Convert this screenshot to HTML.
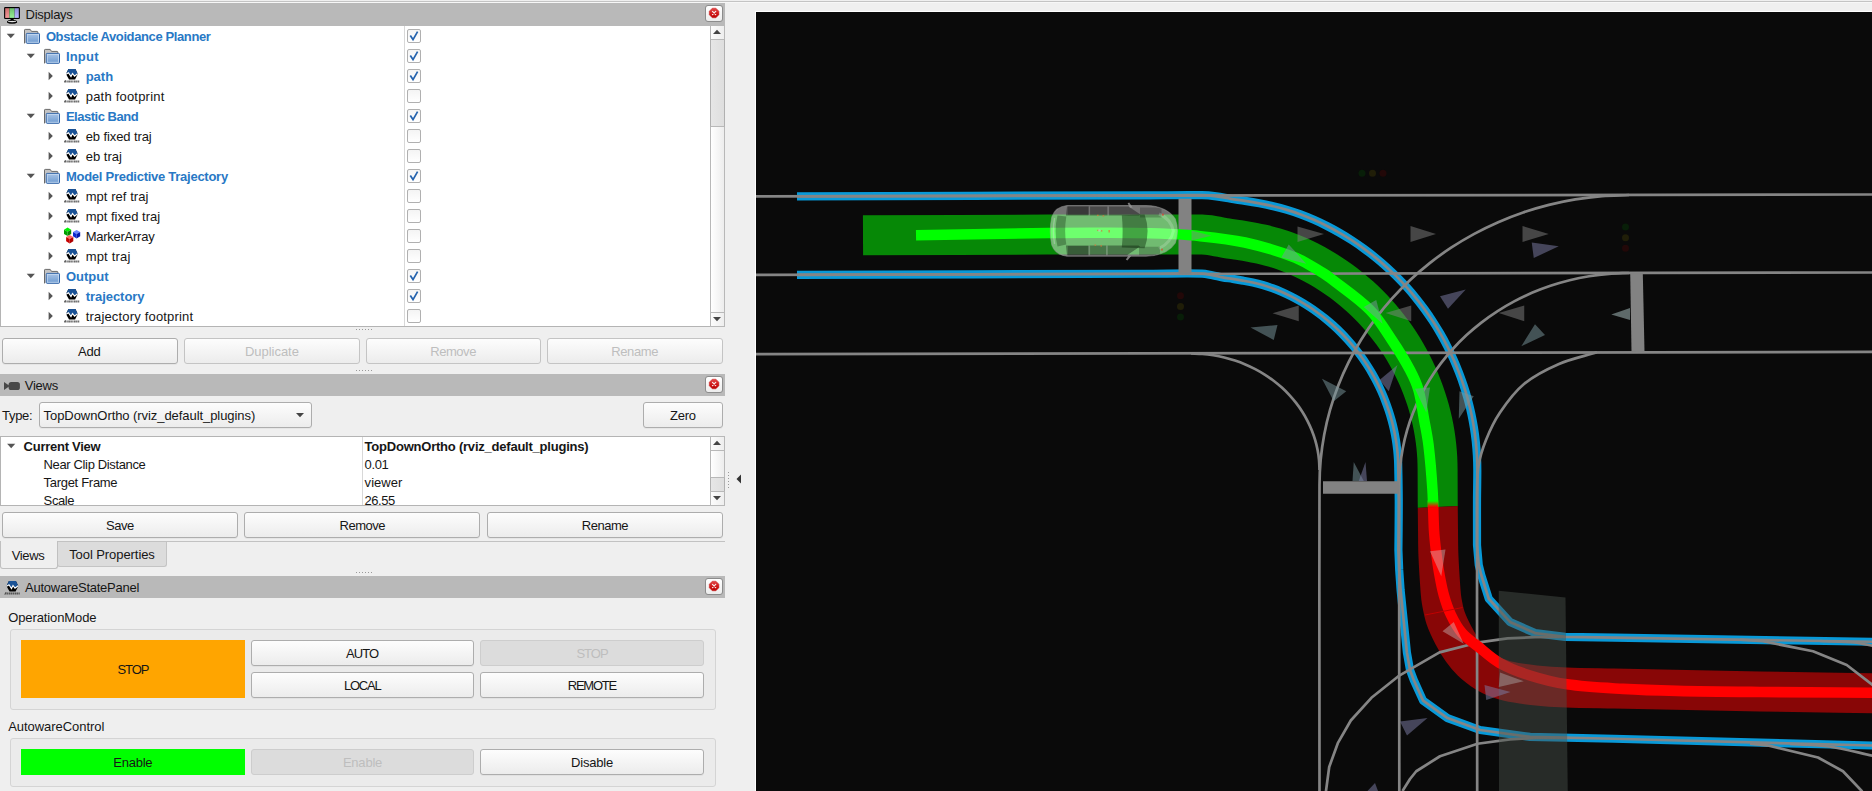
<!DOCTYPE html>
<html><head><meta charset="utf-8"><title>RViz</title>
<style>
html,body{margin:0;padding:0;}
body{width:1872px;height:791px;overflow:hidden;background:#efefef;position:relative;font-family:'Liberation Sans',sans-serif;}
.a{position:absolute;display:block;}
.t{position:absolute;white-space:pre;line-height:16px;height:16px;font-size:13px;font-family:'Liberation Sans',sans-serif;}
.bar{position:absolute;left:0;width:725px;background:#b9b9b9;}
.box{position:absolute;background:#fff;border:1px solid #b4b4b4;box-sizing:border-box;}
.btn{position:absolute;border:1px solid #adadad;border-radius:3px;background:linear-gradient(#fdfdfd,#ececec);box-shadow:0 1px 0 rgba(0,0,0,0.04);}
.btn.dis{border-color:#c4c4c4;box-shadow:none;}
.btn.flat{background:#dcdcdc;border-color:#cdcdcd;box-shadow:none;}
.cb{position:absolute;width:12px;height:12px;border:1px solid #b0b0b0;border-radius:2px;background:linear-gradient(#f4f4f4,#fff);}
.cl{position:absolute;width:16px;height:15px;border:1px solid #8c8c8c;border-radius:3px;background:linear-gradient(#fff,#ececec);}
.dot{position:absolute;width:1px;height:1px;background:#9a9a9a;}
.sb{position:absolute;background:linear-gradient(90deg,#fff,#ededed);border-left:1px solid #b8b8b8;border-right:1px solid #b8b8b8;box-sizing:border-box;}
.sbh{position:absolute;background:linear-gradient(90deg,#e6e6e6,#dedede);border-left:1px solid #b0b0b0;border-right:1px solid #b0b0b0;border-bottom:1px solid #b8b8b8;border-top:1px solid #b8b8b8;box-sizing:border-box;}
.sbb{position:absolute;background:linear-gradient(90deg,#fcfcfc,#eee);border:1px solid #b8b8b8;box-sizing:border-box;}
.grp{position:absolute;border:1px solid #d4d4d4;border-radius:3px;background:#ebebeb;box-sizing:border-box;}
</style></head><body>
<!-- top strip -->
<div class="a" style="left:0;top:1px;width:1872px;height:1px;background:#c3c3c3"></div>
<div class="a" style="left:0;top:2px;width:1872px;height:1px;background:#f7f7f7"></div>

<!-- Displays panel -->
<div class="bar" style="top:3px;height:23px"></div>
<svg class="a" style="left:3px;top:6px" width="18" height="18" viewBox="0 0 18 18">
<rect x="1.1" y="1.1" width="15.8" height="11.9" rx="1" fill="#000"/>
<defs><linearGradient id="mr" x1="0" y1="0" x2="0" y2="1"><stop offset="0" stop-color="#cf6e6e"/><stop offset="1" stop-color="#f49a9a"/></linearGradient>
<linearGradient id="mg" x1="0" y1="0" x2="0" y2="1"><stop offset="0" stop-color="#6cc06c"/><stop offset="1" stop-color="#98ee98"/></linearGradient>
<linearGradient id="mb" x1="0" y1="0" x2="0" y2="1"><stop offset="0" stop-color="#8e8ed6"/><stop offset="1" stop-color="#b8b8ff"/></linearGradient></defs>
<rect x="2.2" y="2.2" width="4.2" height="9.7" fill="url(#mr)"/><rect x="6.4" y="2.2" width="5.2" height="9.7" fill="url(#mg)"/><rect x="11.6" y="2.2" width="4.2" height="9.7" fill="url(#mb)"/>
<path d="M7.8 13H10.4L11.2 14.6H7Z" fill="#000"/>
<ellipse cx="9.1" cy="15.7" rx="4.9" ry="1.3" fill="#e8e8e8" stroke="#000" stroke-width="0.9"/>
<path d="M4.2 15.9Q9.1 18.2 14 15.9" fill="none" stroke="#000" stroke-width="1.1"/>
</svg>
<div class="cl" style="left:705px;top:5px"></div><svg class="a" style="left:708px;top:7px" width="12" height="12" viewBox="0 0 12 12">
<defs><linearGradient id="rg5" x1="0" y1="0" x2="0" y2="1"><stop offset="0" stop-color="#e24a4a"/><stop offset="0.55" stop-color="#d01818"/><stop offset="1" stop-color="#b80000"/></linearGradient></defs>
<path d="M4.3 1.2H7.9L10.9 4.2V7.8L7.9 10.8H4.3L1.3 7.8V4.2Z" fill="url(#rg5)" stroke="#c81c1c" stroke-width="0.5"/>
<path d="M4.5 4.4L7.7 7.6M7.7 4.4L4.5 7.6" stroke="#f6eaea" stroke-width="1.25" stroke-linecap="round"/></svg>
<div class="box" style="left:0;top:26px;width:725px;height:301px;border-top:none;border-right:none"></div>
<div class="a" style="left:404px;top:26px;width:1px;height:300px;background:#d8d8d8"></div>
<div class="sb" style="left:710px;top:26px;width:15px;height:300px"></div>
<div class="sbb" style="left:710px;top:25px;width:15px;height:15px"></div>
<div class="sbh" style="left:710px;top:39px;width:15px;height:88px"></div>
<div class="sbb" style="left:710px;top:312px;width:15px;height:15px"></div>
<svg class="a" style="left:712px;top:29px" width="10" height="6"><path d="M1 5L5 0.8L9 5Z" fill="#444"/></svg>
<svg class="a" style="left:712px;top:316px" width="10" height="6"><path d="M1 1L5 5.2L9 1Z" fill="#444"/></svg>
<svg class="a" style="left:6px;top:33px" width="11" height="7"><g transform="translate(0.10,0.00)"><path d="M0.6 0.8H8.8L4.7 5.2Z" fill="#555"/></g></svg>
<svg class="a" style="left:24px;top:28px" width="17" height="17"><g transform="translate(0.00,0.90)"><path d="M0.5 14.5V1.2Q0.5 0.5 1.2 0.5H6.2L7.5 2.5H13.2Q13.8 2.5 13.8 3.2V5" fill="#c4c4c4" stroke="#6a6a6a"/>
<defs><linearGradient id="fg" x1="0" y1="0" x2="0" y2="1"><stop offset="0" stop-color="#a9c4e6"/><stop offset="1" stop-color="#6c9ad0"/></linearGradient></defs><rect x="2.3" y="4.5" width="13.2" height="9.9" rx="0.8" fill="url(#fg)" stroke="#2f62a6"/>
<rect x="3.3" y="5.5" width="11.2" height="7.9" fill="none" stroke="#c9dcf1" stroke-opacity="0.8"/>
</g></svg>
<div class="cb" style="left:407px;top:29px"></div><svg class="a" style="left:407px;top:29px" width="14" height="14"><path d="M3.3 6.6L6 10.6L10.6 2.6" fill="none" stroke="#2563ae" stroke-width="1.7" stroke-linejoin="miter"/></svg>
<svg class="a" style="left:26px;top:53px" width="11" height="7"><g transform="translate(0.10,0.00)"><path d="M0.6 0.8H8.8L4.7 5.2Z" fill="#555"/></g></svg>
<svg class="a" style="left:44px;top:48px" width="17" height="17"><g transform="translate(0.00,0.90)"><path d="M0.5 14.5V1.2Q0.5 0.5 1.2 0.5H6.2L7.5 2.5H13.2Q13.8 2.5 13.8 3.2V5" fill="#c4c4c4" stroke="#6a6a6a"/>
<defs><linearGradient id="fg" x1="0" y1="0" x2="0" y2="1"><stop offset="0" stop-color="#a9c4e6"/><stop offset="1" stop-color="#6c9ad0"/></linearGradient></defs><rect x="2.3" y="4.5" width="13.2" height="9.9" rx="0.8" fill="url(#fg)" stroke="#2f62a6"/>
<rect x="3.3" y="5.5" width="11.2" height="7.9" fill="none" stroke="#c9dcf1" stroke-opacity="0.8"/>
</g></svg>
<div class="cb" style="left:407px;top:49px"></div><svg class="a" style="left:407px;top:49px" width="14" height="14"><path d="M3.3 6.6L6 10.6L10.6 2.6" fill="none" stroke="#2563ae" stroke-width="1.7" stroke-linejoin="miter"/></svg>
<svg class="a" style="left:47px;top:71px" width="7" height="11"><g transform="translate(0.80,0.00)"><path d="M0.8 0.8L5 5L0.8 9.2Z" fill="#555"/></g></svg>
<svg class="a" style="left:64px;top:68px" width="17" height="17"><g transform="translate(0.00,0.00)"><path d="M4.4 1H11.4L13.8 6.1L11.1 11.4H5L2 6.1Z" fill="#000"/>
<path d="M4.4 1H11.4L13.6 5.6L10.6 8L8.5 5.2L7 8.4L4.5 4.6L2.1 6Z" fill="#1a5296"/>
<path d="M2 6.3L4.5 4.7L7 8.6L8.5 5.5L10.5 8.2L13.6 5.7" fill="none" stroke="#fff" stroke-width="1.1"/>
<path d="M0.6 13.5H15.6" stroke="#2a2a2a" stroke-opacity="0.7" stroke-width="2.2" stroke-dasharray="1.5 0.45 1.2 0.5 1.7 0.4"/>
<path d="M0.1 14.5L1.5 12.3" stroke="#444" stroke-width="0.8"/></g></svg>
<div class="cb" style="left:407px;top:69px"></div><svg class="a" style="left:407px;top:69px" width="14" height="14"><path d="M3.3 6.6L6 10.6L10.6 2.6" fill="none" stroke="#2563ae" stroke-width="1.7" stroke-linejoin="miter"/></svg>
<svg class="a" style="left:47px;top:91px" width="7" height="11"><g transform="translate(0.80,0.00)"><path d="M0.8 0.8L5 5L0.8 9.2Z" fill="#555"/></g></svg>
<svg class="a" style="left:64px;top:88px" width="17" height="17"><g transform="translate(0.00,0.00)"><path d="M4.4 1H11.4L13.8 6.1L11.1 11.4H5L2 6.1Z" fill="#000"/>
<path d="M4.4 1H11.4L13.6 5.6L10.6 8L8.5 5.2L7 8.4L4.5 4.6L2.1 6Z" fill="#1a5296"/>
<path d="M2 6.3L4.5 4.7L7 8.6L8.5 5.5L10.5 8.2L13.6 5.7" fill="none" stroke="#fff" stroke-width="1.1"/>
<path d="M0.6 13.5H15.6" stroke="#2a2a2a" stroke-opacity="0.7" stroke-width="2.2" stroke-dasharray="1.5 0.45 1.2 0.5 1.7 0.4"/>
<path d="M0.1 14.5L1.5 12.3" stroke="#444" stroke-width="0.8"/></g></svg>
<div class="cb" style="left:407px;top:89px"></div>
<svg class="a" style="left:26px;top:113px" width="11" height="7"><g transform="translate(0.10,0.00)"><path d="M0.6 0.8H8.8L4.7 5.2Z" fill="#555"/></g></svg>
<svg class="a" style="left:44px;top:108px" width="17" height="17"><g transform="translate(0.00,0.90)"><path d="M0.5 14.5V1.2Q0.5 0.5 1.2 0.5H6.2L7.5 2.5H13.2Q13.8 2.5 13.8 3.2V5" fill="#c4c4c4" stroke="#6a6a6a"/>
<defs><linearGradient id="fg" x1="0" y1="0" x2="0" y2="1"><stop offset="0" stop-color="#a9c4e6"/><stop offset="1" stop-color="#6c9ad0"/></linearGradient></defs><rect x="2.3" y="4.5" width="13.2" height="9.9" rx="0.8" fill="url(#fg)" stroke="#2f62a6"/>
<rect x="3.3" y="5.5" width="11.2" height="7.9" fill="none" stroke="#c9dcf1" stroke-opacity="0.8"/>
</g></svg>
<div class="cb" style="left:407px;top:109px"></div><svg class="a" style="left:407px;top:109px" width="14" height="14"><path d="M3.3 6.6L6 10.6L10.6 2.6" fill="none" stroke="#2563ae" stroke-width="1.7" stroke-linejoin="miter"/></svg>
<svg class="a" style="left:47px;top:131px" width="7" height="11"><g transform="translate(0.80,0.00)"><path d="M0.8 0.8L5 5L0.8 9.2Z" fill="#555"/></g></svg>
<svg class="a" style="left:64px;top:128px" width="17" height="17"><g transform="translate(0.00,0.00)"><path d="M4.4 1H11.4L13.8 6.1L11.1 11.4H5L2 6.1Z" fill="#000"/>
<path d="M4.4 1H11.4L13.6 5.6L10.6 8L8.5 5.2L7 8.4L4.5 4.6L2.1 6Z" fill="#1a5296"/>
<path d="M2 6.3L4.5 4.7L7 8.6L8.5 5.5L10.5 8.2L13.6 5.7" fill="none" stroke="#fff" stroke-width="1.1"/>
<path d="M0.6 13.5H15.6" stroke="#2a2a2a" stroke-opacity="0.7" stroke-width="2.2" stroke-dasharray="1.5 0.45 1.2 0.5 1.7 0.4"/>
<path d="M0.1 14.5L1.5 12.3" stroke="#444" stroke-width="0.8"/></g></svg>
<div class="cb" style="left:407px;top:129px"></div>
<svg class="a" style="left:47px;top:151px" width="7" height="11"><g transform="translate(0.80,0.00)"><path d="M0.8 0.8L5 5L0.8 9.2Z" fill="#555"/></g></svg>
<svg class="a" style="left:64px;top:148px" width="17" height="17"><g transform="translate(0.00,0.00)"><path d="M4.4 1H11.4L13.8 6.1L11.1 11.4H5L2 6.1Z" fill="#000"/>
<path d="M4.4 1H11.4L13.6 5.6L10.6 8L8.5 5.2L7 8.4L4.5 4.6L2.1 6Z" fill="#1a5296"/>
<path d="M2 6.3L4.5 4.7L7 8.6L8.5 5.5L10.5 8.2L13.6 5.7" fill="none" stroke="#fff" stroke-width="1.1"/>
<path d="M0.6 13.5H15.6" stroke="#2a2a2a" stroke-opacity="0.7" stroke-width="2.2" stroke-dasharray="1.5 0.45 1.2 0.5 1.7 0.4"/>
<path d="M0.1 14.5L1.5 12.3" stroke="#444" stroke-width="0.8"/></g></svg>
<div class="cb" style="left:407px;top:149px"></div>
<svg class="a" style="left:26px;top:173px" width="11" height="7"><g transform="translate(0.10,0.00)"><path d="M0.6 0.8H8.8L4.7 5.2Z" fill="#555"/></g></svg>
<svg class="a" style="left:44px;top:168px" width="17" height="17"><g transform="translate(0.00,0.90)"><path d="M0.5 14.5V1.2Q0.5 0.5 1.2 0.5H6.2L7.5 2.5H13.2Q13.8 2.5 13.8 3.2V5" fill="#c4c4c4" stroke="#6a6a6a"/>
<defs><linearGradient id="fg" x1="0" y1="0" x2="0" y2="1"><stop offset="0" stop-color="#a9c4e6"/><stop offset="1" stop-color="#6c9ad0"/></linearGradient></defs><rect x="2.3" y="4.5" width="13.2" height="9.9" rx="0.8" fill="url(#fg)" stroke="#2f62a6"/>
<rect x="3.3" y="5.5" width="11.2" height="7.9" fill="none" stroke="#c9dcf1" stroke-opacity="0.8"/>
</g></svg>
<div class="cb" style="left:407px;top:169px"></div><svg class="a" style="left:407px;top:169px" width="14" height="14"><path d="M3.3 6.6L6 10.6L10.6 2.6" fill="none" stroke="#2563ae" stroke-width="1.7" stroke-linejoin="miter"/></svg>
<svg class="a" style="left:47px;top:191px" width="7" height="11"><g transform="translate(0.80,0.00)"><path d="M0.8 0.8L5 5L0.8 9.2Z" fill="#555"/></g></svg>
<svg class="a" style="left:64px;top:188px" width="17" height="17"><g transform="translate(0.00,0.00)"><path d="M4.4 1H11.4L13.8 6.1L11.1 11.4H5L2 6.1Z" fill="#000"/>
<path d="M4.4 1H11.4L13.6 5.6L10.6 8L8.5 5.2L7 8.4L4.5 4.6L2.1 6Z" fill="#1a5296"/>
<path d="M2 6.3L4.5 4.7L7 8.6L8.5 5.5L10.5 8.2L13.6 5.7" fill="none" stroke="#fff" stroke-width="1.1"/>
<path d="M0.6 13.5H15.6" stroke="#2a2a2a" stroke-opacity="0.7" stroke-width="2.2" stroke-dasharray="1.5 0.45 1.2 0.5 1.7 0.4"/>
<path d="M0.1 14.5L1.5 12.3" stroke="#444" stroke-width="0.8"/></g></svg>
<div class="cb" style="left:407px;top:189px"></div>
<svg class="a" style="left:47px;top:211px" width="7" height="11"><g transform="translate(0.80,0.00)"><path d="M0.8 0.8L5 5L0.8 9.2Z" fill="#555"/></g></svg>
<svg class="a" style="left:64px;top:208px" width="17" height="17"><g transform="translate(0.00,0.00)"><path d="M4.4 1H11.4L13.8 6.1L11.1 11.4H5L2 6.1Z" fill="#000"/>
<path d="M4.4 1H11.4L13.6 5.6L10.6 8L8.5 5.2L7 8.4L4.5 4.6L2.1 6Z" fill="#1a5296"/>
<path d="M2 6.3L4.5 4.7L7 8.6L8.5 5.5L10.5 8.2L13.6 5.7" fill="none" stroke="#fff" stroke-width="1.1"/>
<path d="M0.6 13.5H15.6" stroke="#2a2a2a" stroke-opacity="0.7" stroke-width="2.2" stroke-dasharray="1.5 0.45 1.2 0.5 1.7 0.4"/>
<path d="M0.1 14.5L1.5 12.3" stroke="#444" stroke-width="0.8"/></g></svg>
<div class="cb" style="left:407px;top:209px"></div>
<svg class="a" style="left:47px;top:231px" width="7" height="11"><g transform="translate(0.80,0.00)"><path d="M0.8 0.8L5 5L0.8 9.2Z" fill="#555"/></g></svg>
<svg class="a" style="left:64px;top:227px" width="19" height="19"><g transform="translate(0.00,0.50)"><path d="M3.6 0.09999999999999964L7.2 2.1999999999999997L3.6 4.3L0.0 2.1999999999999997Z" fill="#00f400"/><path d="M0.0 2.1999999999999997L3.6 4.3V8.6L0.0 6.4Z" fill="#00a000"/><path d="M7.2 2.1999999999999997L3.6 4.3V8.6L7.2 6.4Z" fill="#008800"/><path d="M12.6 2.3999999999999995L16.2 4.5L12.6 6.6L9.0 4.5Z" fill="#6a86ff"/><path d="M9.0 4.5L12.6 6.6V10.899999999999999L9.0 8.7Z" fill="#0a2ad0"/><path d="M16.2 4.5L12.6 6.6V10.899999999999999L16.2 8.7Z" fill="#0018b0"/><path d="M5.7 7.3999999999999995L9.3 9.5L5.7 11.6L2.1 9.5Z" fill="#ff6666"/><path d="M2.1 9.5L5.7 11.6V15.899999999999999L2.1 13.7Z" fill="#c80000"/><path d="M9.3 9.5L5.7 11.6V15.899999999999999L9.3 13.7Z" fill="#b00000"/></g></svg>
<div class="cb" style="left:407px;top:229px"></div>
<svg class="a" style="left:47px;top:251px" width="7" height="11"><g transform="translate(0.80,0.00)"><path d="M0.8 0.8L5 5L0.8 9.2Z" fill="#555"/></g></svg>
<svg class="a" style="left:64px;top:248px" width="17" height="17"><g transform="translate(0.00,0.00)"><path d="M4.4 1H11.4L13.8 6.1L11.1 11.4H5L2 6.1Z" fill="#000"/>
<path d="M4.4 1H11.4L13.6 5.6L10.6 8L8.5 5.2L7 8.4L4.5 4.6L2.1 6Z" fill="#1a5296"/>
<path d="M2 6.3L4.5 4.7L7 8.6L8.5 5.5L10.5 8.2L13.6 5.7" fill="none" stroke="#fff" stroke-width="1.1"/>
<path d="M0.6 13.5H15.6" stroke="#2a2a2a" stroke-opacity="0.7" stroke-width="2.2" stroke-dasharray="1.5 0.45 1.2 0.5 1.7 0.4"/>
<path d="M0.1 14.5L1.5 12.3" stroke="#444" stroke-width="0.8"/></g></svg>
<div class="cb" style="left:407px;top:249px"></div>
<svg class="a" style="left:26px;top:273px" width="11" height="7"><g transform="translate(0.10,0.00)"><path d="M0.6 0.8H8.8L4.7 5.2Z" fill="#555"/></g></svg>
<svg class="a" style="left:44px;top:268px" width="17" height="17"><g transform="translate(0.00,0.90)"><path d="M0.5 14.5V1.2Q0.5 0.5 1.2 0.5H6.2L7.5 2.5H13.2Q13.8 2.5 13.8 3.2V5" fill="#c4c4c4" stroke="#6a6a6a"/>
<defs><linearGradient id="fg" x1="0" y1="0" x2="0" y2="1"><stop offset="0" stop-color="#a9c4e6"/><stop offset="1" stop-color="#6c9ad0"/></linearGradient></defs><rect x="2.3" y="4.5" width="13.2" height="9.9" rx="0.8" fill="url(#fg)" stroke="#2f62a6"/>
<rect x="3.3" y="5.5" width="11.2" height="7.9" fill="none" stroke="#c9dcf1" stroke-opacity="0.8"/>
</g></svg>
<div class="cb" style="left:407px;top:269px"></div><svg class="a" style="left:407px;top:269px" width="14" height="14"><path d="M3.3 6.6L6 10.6L10.6 2.6" fill="none" stroke="#2563ae" stroke-width="1.7" stroke-linejoin="miter"/></svg>
<svg class="a" style="left:47px;top:291px" width="7" height="11"><g transform="translate(0.80,0.00)"><path d="M0.8 0.8L5 5L0.8 9.2Z" fill="#555"/></g></svg>
<svg class="a" style="left:64px;top:288px" width="17" height="17"><g transform="translate(0.00,0.00)"><path d="M4.4 1H11.4L13.8 6.1L11.1 11.4H5L2 6.1Z" fill="#000"/>
<path d="M4.4 1H11.4L13.6 5.6L10.6 8L8.5 5.2L7 8.4L4.5 4.6L2.1 6Z" fill="#1a5296"/>
<path d="M2 6.3L4.5 4.7L7 8.6L8.5 5.5L10.5 8.2L13.6 5.7" fill="none" stroke="#fff" stroke-width="1.1"/>
<path d="M0.6 13.5H15.6" stroke="#2a2a2a" stroke-opacity="0.7" stroke-width="2.2" stroke-dasharray="1.5 0.45 1.2 0.5 1.7 0.4"/>
<path d="M0.1 14.5L1.5 12.3" stroke="#444" stroke-width="0.8"/></g></svg>
<div class="cb" style="left:407px;top:289px"></div><svg class="a" style="left:407px;top:289px" width="14" height="14"><path d="M3.3 6.6L6 10.6L10.6 2.6" fill="none" stroke="#2563ae" stroke-width="1.7" stroke-linejoin="miter"/></svg>
<svg class="a" style="left:47px;top:311px" width="7" height="11"><g transform="translate(0.80,0.00)"><path d="M0.8 0.8L5 5L0.8 9.2Z" fill="#555"/></g></svg>
<svg class="a" style="left:64px;top:308px" width="17" height="17"><g transform="translate(0.00,0.00)"><path d="M4.4 1H11.4L13.8 6.1L11.1 11.4H5L2 6.1Z" fill="#000"/>
<path d="M4.4 1H11.4L13.6 5.6L10.6 8L8.5 5.2L7 8.4L4.5 4.6L2.1 6Z" fill="#1a5296"/>
<path d="M2 6.3L4.5 4.7L7 8.6L8.5 5.5L10.5 8.2L13.6 5.7" fill="none" stroke="#fff" stroke-width="1.1"/>
<path d="M0.6 13.5H15.6" stroke="#2a2a2a" stroke-opacity="0.7" stroke-width="2.2" stroke-dasharray="1.5 0.45 1.2 0.5 1.7 0.4"/>
<path d="M0.1 14.5L1.5 12.3" stroke="#444" stroke-width="0.8"/></g></svg>
<div class="cb" style="left:407px;top:309px"></div>
<div class="dot" style="left:356px;top:329px"></div><div class="dot" style="left:359px;top:329px"></div><div class="dot" style="left:362px;top:329px"></div><div class="dot" style="left:365px;top:329px"></div><div class="dot" style="left:368px;top:329px"></div><div class="dot" style="left:371px;top:329px"></div>
<div class="btn" style="left:2px;top:338px;width:174px;height:24px"></div><div class="btn dis" style="left:184px;top:338px;width:174px;height:24px"></div><div class="btn dis" style="left:366px;top:338px;width:173px;height:24px"></div><div class="btn dis" style="left:547px;top:338px;width:174px;height:24px"></div>
<div class="dot" style="left:356px;top:370px"></div><div class="dot" style="left:359px;top:370px"></div><div class="dot" style="left:362px;top:370px"></div><div class="dot" style="left:365px;top:370px"></div><div class="dot" style="left:368px;top:370px"></div><div class="dot" style="left:371px;top:370px"></div>

<!-- Views panel -->
<div class="bar" style="top:374px;height:22px"></div>
<svg class="a" style="left:3px;top:381px" width="18" height="10"><path d="M1 1L6.8 5L1 9Z" fill="#484848"/><rect x="5.6" y="1" width="11.3" height="8" rx="2.6" fill="#484848"/></svg>
<div class="cl" style="left:705px;top:376px"></div><svg class="a" style="left:708px;top:378px" width="12" height="12" viewBox="0 0 12 12">
<defs><linearGradient id="rg376" x1="0" y1="0" x2="0" y2="1"><stop offset="0" stop-color="#e24a4a"/><stop offset="0.55" stop-color="#d01818"/><stop offset="1" stop-color="#b80000"/></linearGradient></defs>
<path d="M4.3 1.2H7.9L10.9 4.2V7.8L7.9 10.8H4.3L1.3 7.8V4.2Z" fill="url(#rg376)" stroke="#c81c1c" stroke-width="0.5"/>
<path d="M4.5 4.4L7.7 7.6M7.7 4.4L4.5 7.6" stroke="#f6eaea" stroke-width="1.25" stroke-linecap="round"/></svg>
<div class="btn" style="left:39px;top:402px;width:271px;height:24px"></div>
<svg class="a" style="left:295px;top:412px" width="10" height="6"><path d="M1 1H9L5 5.2Z" fill="#444"/></svg>
<div class="btn" style="left:643px;top:402px;width:78px;height:24px"></div>
<div class="box" style="left:0;top:436px;width:725px;height:70px;border-right:none"></div>
<div class="a" style="left:362px;top:437px;width:1px;height:68px;background:#d8d8d8"></div>
<div class="sb" style="left:710px;top:437px;width:15px;height:68px"></div>
<div class="sbb" style="left:710px;top:436px;width:15px;height:15px"></div>
<div class="sbh" style="left:710px;top:477px;width:15px;height:15px"></div>
<div class="sbb" style="left:710px;top:491px;width:15px;height:15px"></div>
<svg class="a" style="left:712px;top:440px" width="10" height="6"><path d="M1 5L5 0.8L9 5Z" fill="#444"/></svg>
<svg class="a" style="left:712px;top:495px" width="10" height="6"><path d="M1 1L5 5.2L9 1Z" fill="#444"/></svg>
<svg class="a" style="left:6px;top:443px" width="11" height="7"><g transform="translate(0.50,0.00)"><path d="M0.6 0.8H8.8L4.7 5.2Z" fill="#555"/></g></svg>
<div class="btn" style="left:2px;top:512px;width:234px;height:24px"></div><div class="btn" style="left:244px;top:512px;width:234px;height:24px"></div><div class="btn" style="left:487px;top:512px;width:234px;height:24px"></div>
<!-- tabs -->
<div class="a" style="left:0;top:541px;width:725px;height:1px;background:#c2c2c2"></div>
<div class="a" style="left:57px;top:542px;width:110px;height:25px;background:#dcdcdc;border:1px solid #c4c4c4;border-top:none;border-radius:0 0 3px 3px;box-sizing:border-box"></div>
<div class="a" style="left:0;top:541px;width:58px;height:28px;background:#efefef;border:1px solid #c0c0c0;border-top:none;border-radius:0 0 3px 3px;box-sizing:border-box"></div>
<div class="dot" style="left:356px;top:572px"></div><div class="dot" style="left:359px;top:572px"></div><div class="dot" style="left:362px;top:572px"></div><div class="dot" style="left:365px;top:572px"></div><div class="dot" style="left:368px;top:572px"></div><div class="dot" style="left:371px;top:572px"></div>

<!-- AutowareStatePanel -->
<div class="bar" style="top:576px;height:22px"></div>
<svg class="a" style="left:4px;top:580px" width="17" height="17"><g transform="translate(0.50,0.00)"><path d="M4.4 1H11.4L13.8 6.1L11.1 11.4H5L2 6.1Z" fill="#000"/>
<path d="M4.4 1H11.4L13.6 5.6L10.6 8L8.5 5.2L7 8.4L4.5 4.6L2.1 6Z" fill="#1a5296"/>
<path d="M2 6.3L4.5 4.7L7 8.6L8.5 5.5L10.5 8.2L13.6 5.7" fill="none" stroke="#fff" stroke-width="1.1"/>
<path d="M0.6 13.5H15.6" stroke="#2a2a2a" stroke-opacity="0.7" stroke-width="2.2" stroke-dasharray="1.5 0.45 1.2 0.5 1.7 0.4"/>
<path d="M0.1 14.5L1.5 12.3" stroke="#444" stroke-width="0.8"/></g></svg>
<div class="cl" style="left:705px;top:578px"></div><svg class="a" style="left:708px;top:580px" width="12" height="12" viewBox="0 0 12 12">
<defs><linearGradient id="rg578" x1="0" y1="0" x2="0" y2="1"><stop offset="0" stop-color="#e24a4a"/><stop offset="0.55" stop-color="#d01818"/><stop offset="1" stop-color="#b80000"/></linearGradient></defs>
<path d="M4.3 1.2H7.9L10.9 4.2V7.8L7.9 10.8H4.3L1.3 7.8V4.2Z" fill="url(#rg578)" stroke="#c81c1c" stroke-width="0.5"/>
<path d="M4.5 4.4L7.7 7.6M7.7 4.4L4.5 7.6" stroke="#f6eaea" stroke-width="1.25" stroke-linecap="round"/></svg>
<div class="grp" style="left:10px;top:629px;width:706px;height:81px"></div>
<div class="a" style="left:21px;top:640px;width:224px;height:58px;background:#ffa500"></div>
<div class="btn" style="left:251px;top:640px;width:221px;height:24px"></div><div class="btn flat" style="left:480px;top:640px;width:222px;height:24px"></div>
<div class="btn" style="left:251px;top:672px;width:221px;height:24px"></div><div class="btn" style="left:480px;top:672px;width:222px;height:24px"></div>
<div class="grp" style="left:10px;top:738px;width:706px;height:49px"></div>
<div class="a" style="left:21px;top:749px;width:224px;height:26px;background:#00ff00"></div>
<div class="btn flat" style="left:251px;top:749px;width:221px;height:24px"></div><div class="btn" style="left:480px;top:749px;width:222px;height:24px"></div>

<!-- splitter -->
<div class="dot" style="left:728px;top:472px"></div><div class="dot" style="left:728px;top:475px"></div><div class="dot" style="left:728px;top:478px"></div><div class="dot" style="left:728px;top:481px"></div><div class="dot" style="left:728px;top:484px"></div><div class="dot" style="left:728px;top:487px"></div>
<svg class="a" style="left:735px;top:473px" width="8" height="12"><path d="M6 1.5V10.5L1.5 6Z" fill="#333"/></svg>

<div class="t" style="left:45.90px;top:29.00px;letter-spacing:-0.385px;color:#2878c5;font-size:13px;font-weight:bold;">Obstacle Avoidance Planner</div>
<div class="t" style="left:65.90px;top:49.00px;letter-spacing:0.207px;color:#2878c5;font-size:13px;font-weight:bold;">Input</div>
<div class="t" style="left:85.70px;top:69.00px;letter-spacing:-0.013px;color:#2878c5;font-size:13px;font-weight:bold;">path</div>
<div class="t" style="left:85.70px;top:89.00px;letter-spacing:0.208px;color:#161616;font-size:13px;">path footprint</div>
<div class="t" style="left:65.90px;top:109.00px;letter-spacing:-0.478px;color:#2878c5;font-size:13px;font-weight:bold;">Elastic Band</div>
<div class="t" style="left:85.70px;top:129.00px;letter-spacing:-0.100px;color:#161616;font-size:13px;">eb fixed traj</div>
<div class="t" style="left:85.70px;top:149.00px;letter-spacing:0.008px;color:#161616;font-size:13px;">eb traj</div>
<div class="t" style="left:65.90px;top:169.00px;letter-spacing:-0.262px;color:#2878c5;font-size:13px;font-weight:bold;">Model Predictive Trajectory</div>
<div class="t" style="left:85.70px;top:189.00px;letter-spacing:0.048px;color:#161616;font-size:13px;">mpt ref traj</div>
<div class="t" style="left:85.70px;top:209.00px;letter-spacing:0.006px;color:#161616;font-size:13px;">mpt fixed traj</div>
<div class="t" style="left:85.70px;top:229.00px;letter-spacing:-0.256px;color:#161616;font-size:13px;">MarkerArray</div>
<div class="t" style="left:85.70px;top:249.00px;letter-spacing:0.182px;color:#161616;font-size:13px;">mpt traj</div>
<div class="t" style="left:65.90px;top:269.00px;letter-spacing:0.018px;color:#2878c5;font-size:13px;font-weight:bold;">Output</div>
<div class="t" style="left:85.70px;top:289.00px;letter-spacing:-0.045px;color:#2878c5;font-size:13px;font-weight:bold;">trajectory</div>
<div class="t" style="left:85.70px;top:309.00px;letter-spacing:0.178px;color:#161616;font-size:13px;">trajectory footprint</div>
<div class="t" style="left:25.50px;top:7.00px;letter-spacing:-0.253px;color:#161616;font-size:13px;">Displays</div>
<div class="t" style="left:24.80px;top:378.40px;letter-spacing:-0.271px;color:#161616;font-size:13px;">Views</div>
<div class="t" style="left:2.00px;top:408.40px;letter-spacing:-0.279px;color:#161616;font-size:13px;">Type:</div>
<div class="t" style="left:43.60px;top:408.20px;letter-spacing:-0.065px;color:#161616;font-size:13px;">TopDownOrtho (rviz_default_plugins)</div>
<div class="t" style="left:670.00px;top:408.20px;letter-spacing:-0.209px;color:#161616;font-size:13px;">Zero</div>
<div class="t" style="left:23.60px;top:439.20px;letter-spacing:-0.263px;color:#161616;font-size:13px;font-weight:bold;">Current View</div>
<div class="t" style="left:43.60px;top:457.30px;letter-spacing:-0.365px;color:#161616;font-size:13px;">Near Clip Distance</div>
<div class="t" style="left:43.60px;top:475.40px;letter-spacing:-0.301px;color:#161616;font-size:13px;">Target Frame</div>
<div class="t" style="left:43.60px;top:493.40px;letter-spacing:-0.386px;color:#161616;font-size:13px;">Scale</div>
<div class="t" style="left:364.60px;top:439.20px;letter-spacing:-0.223px;color:#161616;font-size:13px;font-weight:bold;">TopDownOrtho (rviz_default_plugins)</div>
<div class="t" style="left:364.60px;top:457.30px;letter-spacing:-0.378px;color:#161616;font-size:13px;">0.01</div>
<div class="t" style="left:364.60px;top:475.40px;letter-spacing:0.037px;color:#161616;font-size:13px;">viewer</div>
<div class="t" style="left:364.60px;top:493.40px;letter-spacing:-0.469px;color:#161616;font-size:13px;">26.55</div>
<div class="t" style="left:78.00px;top:344.30px;letter-spacing:-0.247px;color:#161616;font-size:13px;">Add</div>
<div class="t" style="left:245.00px;top:344.30px;letter-spacing:-0.034px;color:#bebebe;font-size:13px;">Duplicate</div>
<div class="t" style="left:430.20px;top:344.30px;letter-spacing:-0.437px;color:#bebebe;font-size:13px;">Remove</div>
<div class="t" style="left:611.20px;top:344.30px;letter-spacing:-0.357px;color:#bebebe;font-size:13px;">Rename</div>
<div class="t" style="left:106.10px;top:518.40px;letter-spacing:-0.510px;color:#161616;font-size:13px;">Save</div>
<div class="t" style="left:339.60px;top:518.40px;letter-spacing:-0.487px;color:#161616;font-size:13px;">Remove</div>
<div class="t" style="left:581.80px;top:518.40px;letter-spacing:-0.473px;color:#161616;font-size:13px;">Rename</div>
<div class="t" style="left:11.70px;top:547.60px;letter-spacing:-0.351px;color:#161616;font-size:13px;">Views</div>
<div class="t" style="left:69.20px;top:546.60px;letter-spacing:-0.075px;color:#161616;font-size:13px;">Tool Properties</div>
<div class="t" style="left:25.00px;top:580.40px;letter-spacing:-0.246px;color:#161616;font-size:13px;">AutowareStatePanel</div>
<div class="t" style="left:8.20px;top:609.60px;letter-spacing:-0.110px;color:#161616;font-size:13px;">OperationMode</div>
<div class="t" style="left:117.50px;top:662.30px;letter-spacing:-1.068px;color:#161616;font-size:13px;">STOP</div>
<div class="t" style="left:346.10px;top:646.30px;letter-spacing:-0.948px;color:#161616;font-size:13px;">AUTO</div>
<div class="t" style="left:343.90px;top:678.40px;letter-spacing:-1.188px;color:#161616;font-size:13px;">LOCAL</div>
<div class="t" style="left:576.40px;top:646.30px;letter-spacing:-0.968px;color:#bebebe;font-size:13px;">STOP</div>
<div class="t" style="left:567.80px;top:678.40px;letter-spacing:-1.254px;color:#161616;font-size:13px;">REMOTE</div>
<div class="t" style="left:8.20px;top:718.80px;letter-spacing:-0.049px;color:#161616;font-size:13px;">AutowareControl</div>
<div class="t" style="left:113.20px;top:755.40px;letter-spacing:-0.214px;color:#161616;font-size:13px;">Enable</div>
<div class="t" style="left:342.90px;top:755.40px;letter-spacing:-0.214px;color:#bebebe;font-size:13px;">Enable</div>
<div class="t" style="left:571.00px;top:755.40px;letter-spacing:-0.180px;color:#161616;font-size:13px;">Disable</div>

<!-- 3D view -->
<div class="a" style="left:755px;top:11px;width:1117px;height:1px;background:#fff"></div>
<div class="a" style="left:755px;top:11px;width:1px;height:780px;background:#fff"></div>
<svg class="a" style="left:756px;top:12px;background:#0a0a0a" width="1116" height="779" viewBox="756 12 1116 779"><defs><clipPath id="cg"><polygon points="756,12 1872,12 1872,400 1470,400 1470,505.5 1415,508 1300,508 756,508"/></clipPath><clipPath id="crd"><polygon points="1415,508 1470,505.5 1470,400 1872,400 1872,791 1300,791 1300,508"/></clipPath></defs>
<g clip-path="url(#cg)"><path d="M863.00 235.30C924.67 235.07 986.33 234.75 1048.00 234.60C1085.33 234.51 1122.67 234.60 1160.00 234.60C1174.00 234.60 1188.00 234.24 1202.00 234.60C1206.14 234.71 1210.24 235.40 1214.33 236.02C1218.45 236.63 1222.51 237.61 1226.63 238.29C1230.69 238.97 1234.79 239.46 1238.86 240.10C1242.91 240.74 1246.95 241.40 1250.98 242.15C1254.99 242.90 1259.00 243.66 1262.98 244.58C1266.95 245.50 1270.90 246.50 1274.80 247.65C1278.72 248.81 1282.60 250.10 1286.43 251.51C1290.28 252.92 1294.08 254.47 1297.83 256.11C1301.59 257.76 1305.30 259.53 1308.96 261.39C1312.63 263.25 1316.24 265.21 1319.80 267.27C1323.36 269.32 1326.87 271.47 1330.32 273.71C1333.77 275.95 1337.16 278.28 1340.48 280.70C1343.81 283.11 1347.07 285.62 1350.27 288.20C1353.46 290.79 1356.59 293.46 1359.65 296.22C1362.70 298.97 1365.69 301.80 1368.59 304.71C1371.50 307.61 1374.33 310.60 1377.08 313.65C1379.84 316.71 1382.51 319.84 1385.10 323.03C1387.68 326.23 1390.19 329.49 1392.60 332.82C1395.02 336.14 1397.35 339.53 1399.59 342.98C1401.83 346.43 1403.98 349.94 1406.04 353.50C1408.09 357.06 1410.05 360.68 1411.92 364.34C1413.79 368.00 1415.56 371.72 1417.23 375.47C1418.90 379.23 1420.47 383.03 1421.95 386.87C1423.42 390.67 1424.80 394.50 1426.07 398.37C1427.34 402.21 1428.51 406.09 1429.57 410.00C1430.64 413.90 1431.60 417.84 1432.45 421.80C1433.31 425.75 1434.06 429.73 1434.70 433.73C1435.34 437.72 1435.88 441.74 1436.31 445.76C1436.74 449.79 1437.06 453.82 1437.28 457.86C1437.49 461.91 1437.56 465.95 1437.60 470.00C1437.70 480.00 1437.63 490.00 1437.70 500.00C1437.77 510.00 1437.87 520.00 1438.00 530.00C1438.11 538.33 1438.05 546.67 1438.40 555.00C1438.89 566.68 1439.66 578.34 1440.50 590.00C1440.76 593.68 1441.04 597.37 1441.70 601.00C1442.74 606.72 1443.72 612.50 1445.60 618.00C1447.67 624.06 1450.55 629.82 1453.50 635.50C1456.10 640.50 1458.95 645.40 1462.20 650.00C1464.97 653.92 1468.08 657.63 1471.50 661.00C1474.77 664.23 1478.47 667.01 1482.20 669.70C1485.05 671.76 1487.98 673.78 1491.20 675.20C1496.79 677.67 1502.54 679.93 1508.50 681.30C1517.20 683.31 1526.12 684.33 1535.00 685.30C1545.38 686.43 1555.81 687.16 1566.25 687.60C1582.07 688.26 1597.92 688.29 1613.75 688.60C1662.50 689.56 1711.25 690.52 1760.00 691.40C1800.00 692.12 1840.00 692.73 1880.00 693.40" fill="none" stroke="#068806" stroke-width="40"/></g>
<g clip-path="url(#crd)"><path d="M863.00 235.30C924.67 235.07 986.33 234.75 1048.00 234.60C1085.33 234.51 1122.67 234.60 1160.00 234.60C1174.00 234.60 1188.00 234.24 1202.00 234.60C1206.14 234.71 1210.24 235.40 1214.33 236.02C1218.45 236.63 1222.51 237.61 1226.63 238.29C1230.69 238.97 1234.79 239.46 1238.86 240.10C1242.91 240.74 1246.95 241.40 1250.98 242.15C1254.99 242.90 1259.00 243.66 1262.98 244.58C1266.95 245.50 1270.90 246.50 1274.80 247.65C1278.72 248.81 1282.60 250.10 1286.43 251.51C1290.28 252.92 1294.08 254.47 1297.83 256.11C1301.59 257.76 1305.30 259.53 1308.96 261.39C1312.63 263.25 1316.24 265.21 1319.80 267.27C1323.36 269.32 1326.87 271.47 1330.32 273.71C1333.77 275.95 1337.16 278.28 1340.48 280.70C1343.81 283.11 1347.07 285.62 1350.27 288.20C1353.46 290.79 1356.59 293.46 1359.65 296.22C1362.70 298.97 1365.69 301.80 1368.59 304.71C1371.50 307.61 1374.33 310.60 1377.08 313.65C1379.84 316.71 1382.51 319.84 1385.10 323.03C1387.68 326.23 1390.19 329.49 1392.60 332.82C1395.02 336.14 1397.35 339.53 1399.59 342.98C1401.83 346.43 1403.98 349.94 1406.04 353.50C1408.09 357.06 1410.05 360.68 1411.92 364.34C1413.79 368.00 1415.56 371.72 1417.23 375.47C1418.90 379.23 1420.47 383.03 1421.95 386.87C1423.42 390.67 1424.80 394.50 1426.07 398.37C1427.34 402.21 1428.51 406.09 1429.57 410.00C1430.64 413.90 1431.60 417.84 1432.45 421.80C1433.31 425.75 1434.06 429.73 1434.70 433.73C1435.34 437.72 1435.88 441.74 1436.31 445.76C1436.74 449.79 1437.06 453.82 1437.28 457.86C1437.49 461.91 1437.56 465.95 1437.60 470.00C1437.70 480.00 1437.63 490.00 1437.70 500.00C1437.77 510.00 1437.87 520.00 1438.00 530.00C1438.11 538.33 1438.05 546.67 1438.40 555.00C1438.89 566.68 1439.66 578.34 1440.50 590.00C1440.76 593.68 1441.04 597.37 1441.70 601.00C1442.74 606.72 1443.72 612.50 1445.60 618.00C1447.67 624.06 1450.55 629.82 1453.50 635.50C1456.10 640.50 1458.95 645.40 1462.20 650.00C1464.97 653.92 1468.08 657.63 1471.50 661.00C1474.77 664.23 1478.47 667.01 1482.20 669.70C1485.05 671.76 1487.98 673.78 1491.20 675.20C1496.79 677.67 1502.54 679.93 1508.50 681.30C1517.20 683.31 1526.12 684.33 1535.00 685.30C1545.38 686.43 1555.81 687.16 1566.25 687.60C1582.07 688.26 1597.92 688.29 1613.75 688.60C1662.50 689.56 1711.25 690.52 1760.00 691.40C1800.00 692.12 1840.00 692.73 1880.00 693.40" fill="none" stroke="#880606" stroke-width="40"/></g>
<path d="M797.00 196.30C914.67 195.98 1032.33 195.67 1150.00 195.35C1167.33 195.30 1184.67 194.93 1202.00 195.20C1206.82 195.27 1211.63 195.77 1216.41 196.37C1221.23 196.98 1225.98 198.05 1230.78 198.81C1235.53 199.56 1240.31 200.14 1245.07 200.89C1249.80 201.64 1254.53 202.43 1259.24 203.32C1263.93 204.21 1268.61 205.14 1273.25 206.24C1277.89 207.33 1282.51 208.53 1287.07 209.90C1291.65 211.27 1296.18 212.79 1300.66 214.44C1305.15 216.10 1309.59 217.92 1313.97 219.85C1318.37 221.78 1322.70 223.84 1326.98 226.02C1331.27 228.19 1335.49 230.48 1339.65 232.88C1343.81 235.29 1347.91 237.80 1351.94 240.41C1355.97 243.03 1359.93 245.75 1363.82 248.58C1367.70 251.40 1371.52 254.33 1375.25 257.35C1378.99 260.38 1382.64 263.50 1386.21 266.71C1389.78 269.93 1393.27 273.24 1396.67 276.63C1400.06 280.03 1403.37 283.52 1406.59 287.09C1409.80 290.66 1412.92 294.31 1415.95 298.05C1418.97 301.78 1421.90 305.60 1424.72 309.48C1427.55 313.37 1430.27 317.33 1432.89 321.36C1435.50 325.39 1438.01 329.49 1440.42 333.65C1442.82 337.81 1445.11 342.04 1447.29 346.32C1449.48 350.60 1451.54 354.94 1453.50 359.33C1455.45 363.71 1457.29 368.16 1459.01 372.64C1460.73 377.09 1462.34 381.57 1463.83 386.10C1465.31 390.60 1466.68 395.15 1467.92 399.72C1469.16 404.30 1470.29 408.91 1471.28 413.54C1472.28 418.18 1473.16 422.84 1473.91 427.52C1474.66 432.20 1475.29 436.90 1475.79 441.61C1476.29 446.33 1476.67 451.05 1476.92 455.79C1477.17 460.52 1477.29 465.26 1477.30 470.00C1477.32 480.00 1477.05 490.00 1477.00 500.00C1476.95 510.00 1477.00 520.00 1477.00 530.00 L1477.00 530.00L1477.00 545.00L1478.75 565.00L1481.25 575.00L1488.75 598.75L1510.00 621.90L1535.00 633.10L1565.00 636.90L1614.00 637.60L1880.00 641.90" fill="none" stroke="#0899d8" stroke-width="8.2" stroke-linejoin="round"/>
<path d="M797.00 274.80C914.67 274.45 1032.33 274.10 1150.00 273.75C1167.33 273.70 1184.67 273.18 1202.00 273.60C1205.47 273.68 1208.86 274.63 1212.27 275.26C1215.70 275.89 1219.09 276.76 1222.52 277.38C1225.90 277.98 1229.32 278.38 1232.71 278.92C1236.08 279.45 1239.45 279.99 1242.81 280.59C1246.15 281.20 1249.49 281.80 1252.81 282.54C1256.11 283.28 1259.41 284.09 1262.66 285.03C1265.92 285.97 1269.16 287.03 1272.35 288.20C1275.55 289.36 1278.72 290.65 1281.84 292.02C1284.98 293.39 1288.07 294.86 1291.12 296.40C1294.17 297.95 1297.18 299.59 1300.15 301.30C1303.12 303.01 1306.04 304.80 1308.91 306.67C1311.79 308.53 1314.61 310.48 1317.38 312.49C1320.15 314.50 1322.87 316.59 1325.54 318.75C1328.20 320.90 1330.80 323.13 1333.35 325.42C1335.90 327.71 1338.38 330.07 1340.81 332.49C1343.23 334.92 1345.59 337.40 1347.88 339.95C1350.17 342.50 1352.40 345.10 1354.55 347.76C1356.71 350.43 1358.80 353.15 1360.81 355.92C1362.82 358.69 1364.77 361.51 1366.63 364.39C1368.50 367.26 1370.29 370.18 1372.00 373.15C1373.71 376.12 1375.35 379.13 1376.90 382.18C1378.46 385.23 1379.94 388.33 1381.33 391.46C1382.72 394.59 1384.03 397.76 1385.26 400.95C1386.48 404.11 1387.63 407.30 1388.69 410.51C1389.75 413.70 1390.72 416.92 1391.61 420.17C1392.50 423.41 1393.30 426.68 1394.01 429.97C1394.72 433.25 1395.35 436.56 1395.88 439.88C1396.42 443.20 1396.87 446.53 1397.22 449.87C1397.58 453.21 1397.85 456.57 1398.03 459.92C1398.21 463.28 1398.24 466.64 1398.30 470.00C1398.48 480.00 1398.70 490.00 1398.75 500.00C1398.80 510.00 1398.65 520.00 1398.60 530.00 L1398.60 530.00L1398.40 550.00L1399.20 570.00L1400.60 590.00L1403.75 621.25L1406.90 652.50L1410.00 670.00L1413.75 680.00L1423.10 700.60L1447.50 718.10L1480.00 730.00L1530.00 736.90L1613.75 738.75L1880.00 745.70" fill="none" stroke="#0899d8" stroke-width="8.2" stroke-linejoin="round"/>
<path d="M756.00 196.30L1872.00 194.50" fill="none" stroke="#858585" stroke-width="2.7" />
<path d="M756.00 274.80L1872.00 272.50" fill="none" stroke="#858585" stroke-width="2.7" />
<path d="M756.00 354.10L1872.00 351.90" fill="none" stroke="#858585" stroke-width="2.7" />
<path d="M1319.50 791.00C1319.50 689.00 1319.14 587.00 1319.50 485.00C1319.53 476.57 1319.89 468.12 1320.68 459.72C1321.46 451.32 1322.64 442.94 1324.20 434.64C1325.77 426.33 1327.72 418.08 1330.05 409.94C1332.38 401.78 1335.09 393.72 1338.17 385.81C1341.25 377.87 1344.70 370.07 1348.50 362.44C1352.31 354.78 1356.48 347.29 1360.97 340.00C1365.48 332.68 1370.32 325.55 1375.47 318.66C1380.65 311.74 1386.14 305.03 1391.91 298.59C1397.71 292.11 1403.80 285.89 1410.15 279.94C1416.53 273.96 1423.18 268.25 1430.06 262.85C1436.97 257.41 1444.13 252.27 1451.48 247.45C1458.87 242.60 1466.47 238.06 1474.25 233.85C1482.06 229.63 1490.06 225.73 1498.20 222.17C1506.37 218.60 1514.70 215.37 1523.14 212.49C1531.62 209.60 1540.21 207.06 1548.90 204.88C1557.60 202.70 1566.40 200.87 1575.26 199.41C1584.13 197.94 1593.06 196.84 1602.03 196.10C1610.99 195.37 1620.01 195.37 1629.00 195.00" fill="none" stroke="#858585" stroke-width="2.7" />
<path d="M1399.30 791.00C1399.30 689.00 1399.03 587.00 1399.30 485.00C1399.32 478.83 1399.59 472.66 1400.17 466.52C1400.76 460.38 1401.63 454.25 1402.79 448.19C1403.95 442.11 1405.40 436.07 1407.13 430.13C1408.86 424.16 1410.87 418.27 1413.15 412.49C1415.44 406.68 1418.01 400.98 1420.82 395.40C1423.65 389.80 1426.74 384.32 1430.07 379.00C1433.42 373.64 1437.02 368.43 1440.84 363.40C1444.69 358.33 1448.76 353.44 1453.04 348.73C1457.35 343.99 1461.87 339.44 1466.58 335.09C1471.32 330.72 1476.25 326.55 1481.35 322.60C1486.49 318.62 1491.80 314.86 1497.25 311.34C1502.74 307.79 1508.38 304.48 1514.15 301.40C1519.95 298.31 1525.89 295.46 1531.92 292.86C1537.99 290.25 1544.18 287.89 1550.44 285.79C1556.73 283.67 1563.11 281.82 1569.55 280.22C1576.01 278.63 1582.54 277.29 1589.11 276.22C1595.70 275.15 1602.33 274.34 1608.98 273.81C1615.64 273.27 1622.33 273.27 1629.00 273.00" fill="none" stroke="#858585" stroke-width="2.7" />
<path d="M1191.00 353.50C1194.73 353.65 1198.48 353.65 1202.20 353.94C1205.92 354.24 1209.63 354.68 1213.31 355.27C1216.99 355.86 1220.64 356.59 1224.26 357.47C1227.86 358.34 1231.43 359.36 1234.95 360.53C1238.45 361.68 1241.91 362.98 1245.31 364.42C1248.68 365.84 1252.00 367.41 1255.25 369.11C1258.47 370.80 1261.63 372.62 1264.70 374.57C1267.75 376.50 1270.72 378.57 1273.60 380.76C1276.45 382.92 1279.21 385.22 1281.86 387.62C1284.49 390.01 1287.02 392.51 1289.44 395.12C1291.83 397.70 1294.11 400.39 1296.26 403.18C1298.40 405.94 1300.41 408.80 1302.28 411.75C1304.15 414.67 1305.88 417.68 1307.46 420.76C1309.03 423.83 1310.47 426.96 1311.75 430.15C1313.02 433.33 1314.15 436.57 1315.12 439.85C1316.09 443.11 1316.90 446.43 1317.55 449.77C1318.20 453.10 1318.69 456.47 1319.01 459.85C1319.34 463.22 1319.34 466.62 1319.50 470.00" fill="none" stroke="#858585" stroke-width="2.7" />
<path d="M1597.00 352.30C1584.33 356.20 1571.16 358.72 1559.00 364.00C1546.67 369.35 1534.38 375.47 1524.00 384.00C1514.41 391.89 1506.97 402.22 1500.00 412.50C1494.22 421.01 1489.84 430.46 1486.00 440.00C1482.64 448.37 1479.81 457.08 1478.50 466.00C1476.85 477.22 1477.25 488.66 1477.20 500.00C1476.81 597.00 1477.20 694.00 1477.20 791.00" fill="none" stroke="#858585" stroke-width="2.7" />
<path d="M1820.00 641.00C1831.33 641.50 1842.70 641.45 1854.00 642.50C1860.74 643.12 1867.33 644.83 1874.00 646.00" fill="none" stroke="#858585" stroke-width="2.7" />
<path d="M1790.00 744.00C1803.00 744.83 1816.10 744.66 1829.00 746.50C1844.18 748.67 1859.00 752.83 1874.00 756.00" fill="none" stroke="#858585" stroke-width="2.7" />
<path d="M1325.20 800.00L1326.00 791.00L1329.20 767.00L1337.80 743.20L1350.80 720.50L1371.40 697.80L1398.40 676.20L1439.50 652.40L1477.30 642.70L1507.60 638.40L1535.00 637.20L1565.00 637.00" fill="none" stroke="#858585" stroke-width="2.7" stroke-linejoin="round"/>
<path d="M1402.50 791.00L1410.00 779.00L1416.25 771.25L1440.00 756.25L1477.50 743.75L1510.00 739.40L1536.00 737.90L1570.00 738.00" fill="none" stroke="#858585" stroke-width="2.7" stroke-linejoin="round"/>
<path d="M1740.00 639.60L1763.00 641.25L1813.00 651.25L1846.75 665.00L1874.00 686.00" fill="none" stroke="#858585" stroke-width="2.7" stroke-linejoin="round"/>
<path d="M1750.00 743.60L1769.00 745.60L1818.00 757.50L1843.00 771.25L1861.75 791.00L1864.00 795.00" fill="none" stroke="#858585" stroke-width="2.7" stroke-linejoin="round"/>
<path d="M797.00 196.30C914.67 195.98 1032.33 195.67 1150.00 195.35C1167.33 195.30 1184.67 194.93 1202.00 195.20C1206.82 195.27 1211.63 195.77 1216.41 196.37C1221.23 196.98 1225.98 198.05 1230.78 198.81C1235.53 199.56 1240.31 200.14 1245.07 200.89C1249.80 201.64 1254.53 202.43 1259.24 203.32C1263.93 204.21 1268.61 205.14 1273.25 206.24C1277.89 207.33 1282.51 208.53 1287.07 209.90C1291.65 211.27 1296.18 212.79 1300.66 214.44C1305.15 216.10 1309.59 217.92 1313.97 219.85C1318.37 221.78 1322.70 223.84 1326.98 226.02C1331.27 228.19 1335.49 230.48 1339.65 232.88C1343.81 235.29 1347.91 237.80 1351.94 240.41C1355.97 243.03 1359.93 245.75 1363.82 248.58C1367.70 251.40 1371.52 254.33 1375.25 257.35C1378.99 260.38 1382.64 263.50 1386.21 266.71C1389.78 269.93 1393.27 273.24 1396.67 276.63C1400.06 280.03 1403.37 283.52 1406.59 287.09C1409.80 290.66 1412.92 294.31 1415.95 298.05C1418.97 301.78 1421.90 305.60 1424.72 309.48C1427.55 313.37 1430.27 317.33 1432.89 321.36C1435.50 325.39 1438.01 329.49 1440.42 333.65C1442.82 337.81 1445.11 342.04 1447.29 346.32C1449.48 350.60 1451.54 354.94 1453.50 359.33C1455.45 363.71 1457.29 368.16 1459.01 372.64C1460.73 377.09 1462.34 381.57 1463.83 386.10C1465.31 390.60 1466.68 395.15 1467.92 399.72C1469.16 404.30 1470.29 408.91 1471.28 413.54C1472.28 418.18 1473.16 422.84 1473.91 427.52C1474.66 432.20 1475.29 436.90 1475.79 441.61C1476.29 446.33 1476.67 451.05 1476.92 455.79C1477.17 460.52 1477.29 465.26 1477.30 470.00C1477.32 480.00 1477.05 490.00 1477.00 500.00C1476.95 510.00 1477.00 520.00 1477.00 530.00 L1477.00 530.00L1477.00 545.00L1478.75 565.00L1481.25 575.00L1488.75 598.75L1510.00 621.90L1535.00 633.10L1565.00 636.90L1614.00 637.60L1880.00 641.90" fill="none" stroke="#858585" stroke-width="2.7" stroke-linejoin="round"/>
<path d="M797.00 274.80C914.67 274.45 1032.33 274.10 1150.00 273.75C1167.33 273.70 1184.67 273.18 1202.00 273.60C1205.47 273.68 1208.86 274.63 1212.27 275.26C1215.70 275.89 1219.09 276.76 1222.52 277.38C1225.90 277.98 1229.32 278.38 1232.71 278.92C1236.08 279.45 1239.45 279.99 1242.81 280.59C1246.15 281.20 1249.49 281.80 1252.81 282.54C1256.11 283.28 1259.41 284.09 1262.66 285.03C1265.92 285.97 1269.16 287.03 1272.35 288.20C1275.55 289.36 1278.72 290.65 1281.84 292.02C1284.98 293.39 1288.07 294.86 1291.12 296.40C1294.17 297.95 1297.18 299.59 1300.15 301.30C1303.12 303.01 1306.04 304.80 1308.91 306.67C1311.79 308.53 1314.61 310.48 1317.38 312.49C1320.15 314.50 1322.87 316.59 1325.54 318.75C1328.20 320.90 1330.80 323.13 1333.35 325.42C1335.90 327.71 1338.38 330.07 1340.81 332.49C1343.23 334.92 1345.59 337.40 1347.88 339.95C1350.17 342.50 1352.40 345.10 1354.55 347.76C1356.71 350.43 1358.80 353.15 1360.81 355.92C1362.82 358.69 1364.77 361.51 1366.63 364.39C1368.50 367.26 1370.29 370.18 1372.00 373.15C1373.71 376.12 1375.35 379.13 1376.90 382.18C1378.46 385.23 1379.94 388.33 1381.33 391.46C1382.72 394.59 1384.03 397.76 1385.26 400.95C1386.48 404.11 1387.63 407.30 1388.69 410.51C1389.75 413.70 1390.72 416.92 1391.61 420.17C1392.50 423.41 1393.30 426.68 1394.01 429.97C1394.72 433.25 1395.35 436.56 1395.88 439.88C1396.42 443.20 1396.87 446.53 1397.22 449.87C1397.58 453.21 1397.85 456.57 1398.03 459.92C1398.21 463.28 1398.24 466.64 1398.30 470.00C1398.48 480.00 1398.70 490.00 1398.75 500.00C1398.80 510.00 1398.65 520.00 1398.60 530.00 L1398.60 530.00L1398.40 550.00L1399.20 570.00L1400.60 590.00L1403.75 621.25L1406.90 652.50L1410.00 670.00L1413.75 680.00L1423.10 700.60L1447.50 718.10L1480.00 730.00L1530.00 736.90L1613.75 738.75L1880.00 745.70" fill="none" stroke="#858585" stroke-width="2.7" stroke-linejoin="round"/>
<polygon points="1178.50,198.70 1191.50,198.70 1191.50,273.80 1178.50,273.80" fill="#828282" />
<polygon points="1630.20,273.00 1642.80,273.00 1644.50,351.50 1631.50,351.50" fill="#828282" />
<polygon points="1323.00,481.20 1398.80,481.20 1398.80,493.80 1323.00,493.80" fill="#828282" />
<defs><linearGradient id="gr" gradientUnits="userSpaceOnUse" x1="0" y1="501" x2="0" y2="507"><stop offset="0" stop-color="#00ff00"/><stop offset="1" stop-color="#ff0000"/></linearGradient></defs>
<g clip-path="url(#cg)"><path d="M916.00 235.30C960.00 234.53 1004.00 233.57 1048.00 233.00C1068.67 232.73 1089.33 232.71 1110.00 232.80C1126.67 232.87 1143.34 232.95 1160.00 233.50C1171.68 233.88 1183.38 234.37 1195.00 235.60C1211.73 237.37 1228.56 238.90 1245.00 242.50C1262.00 246.22 1278.80 251.14 1295.00 257.50C1305.01 261.43 1313.91 267.78 1323.20 273.20C1325.58 274.59 1327.83 276.20 1330.00 277.90C1343.44 288.47 1357.97 297.85 1370.00 310.00C1378.99 319.07 1385.42 330.38 1392.50 341.00C1398.76 350.39 1404.71 360.03 1410.00 370.00C1413.40 376.40 1416.51 383.03 1418.50 390.00C1421.20 399.46 1422.24 409.32 1424.00 419.00C1425.57 427.65 1427.45 436.27 1428.50 445.00C1430.29 459.95 1431.53 474.97 1432.50 490.00C1433.36 503.31 1433.25 516.68 1434.00 530.00C1434.38 536.69 1435.11 543.35 1435.90 550.00C1436.78 557.35 1437.72 564.71 1439.00 572.00C1440.35 579.71 1441.69 587.46 1443.80 595.00C1445.70 601.82 1447.94 608.61 1451.00 615.00C1454.04 621.34 1457.43 627.66 1462.00 633.00C1466.38 638.13 1472.23 641.80 1477.50 646.00C1484.70 651.73 1491.38 658.29 1499.40 662.80C1509.03 668.21 1519.48 672.15 1530.00 675.50C1542.08 679.34 1554.45 682.49 1567.00 684.30C1585.54 686.97 1604.30 687.78 1623.00 688.90C1640.98 689.98 1658.99 690.49 1677.00 690.90C1704.66 691.53 1732.33 691.74 1760.00 692.00C1800.00 692.37 1840.00 692.53 1880.00 692.80" fill="none" stroke="#00ff00" stroke-width="10.6"/></g>
<g clip-path="url(#crd)"><path d="M916.00 235.30C960.00 234.53 1004.00 233.57 1048.00 233.00C1068.67 232.73 1089.33 232.71 1110.00 232.80C1126.67 232.87 1143.34 232.95 1160.00 233.50C1171.68 233.88 1183.38 234.37 1195.00 235.60C1211.73 237.37 1228.56 238.90 1245.00 242.50C1262.00 246.22 1278.80 251.14 1295.00 257.50C1305.01 261.43 1313.91 267.78 1323.20 273.20C1325.58 274.59 1327.83 276.20 1330.00 277.90C1343.44 288.47 1357.97 297.85 1370.00 310.00C1378.99 319.07 1385.42 330.38 1392.50 341.00C1398.76 350.39 1404.71 360.03 1410.00 370.00C1413.40 376.40 1416.51 383.03 1418.50 390.00C1421.20 399.46 1422.24 409.32 1424.00 419.00C1425.57 427.65 1427.45 436.27 1428.50 445.00C1430.29 459.95 1431.53 474.97 1432.50 490.00C1433.36 503.31 1433.25 516.68 1434.00 530.00C1434.38 536.69 1435.11 543.35 1435.90 550.00C1436.78 557.35 1437.72 564.71 1439.00 572.00C1440.35 579.71 1441.69 587.46 1443.80 595.00C1445.70 601.82 1447.94 608.61 1451.00 615.00C1454.04 621.34 1457.43 627.66 1462.00 633.00C1466.38 638.13 1472.23 641.80 1477.50 646.00C1484.70 651.73 1491.38 658.29 1499.40 662.80C1509.03 668.21 1519.48 672.15 1530.00 675.50C1542.08 679.34 1554.45 682.49 1567.00 684.30C1585.54 686.97 1604.30 687.78 1623.00 688.90C1640.98 689.98 1658.99 690.49 1677.00 690.90C1704.66 691.53 1732.33 691.74 1760.00 692.00C1800.00 692.37 1840.00 692.53 1880.00 692.80" fill="none" stroke="#ff0000" stroke-width="10.6"/></g>
<rect x="1427.6" y="500.5" width="10.6" height="7" fill="url(#gr)"/>
<path d="M1425.00 615.00L1462.50 607.50" fill="none" stroke="#c00000" stroke-width="1" />
<polygon points="1498.75,590.75 1565.50,597.50 1567.75,791.00 1499.00,791.00" fill="rgb(72,81,75)" fill-opacity="0.465"/>
<polygon points="1191.50,230.60 1211.50,235.70 1191.50,240.60" fill="rgba(130,130,130,0.5)" />
<polygon points="1297.50,226.50 1297.50,242.00 1324.00,234.00" fill="rgba(130,130,130,0.5)" />
<polygon points="1410.50,226.00 1410.50,242.00 1436.00,234.00" fill="rgba(130,130,130,0.5)" />
<polygon points="1522.50,226.00 1522.50,242.00 1548.75,234.00" fill="rgba(130,130,130,0.5)" />
<polygon points="1531.75,242.50 1558.75,246.25 1533.75,258.00" fill="rgba(125,125,165,0.52)" />
<polygon points="1288.75,244.50 1281.25,257.50 1306.25,263.75" fill="rgba(120,150,155,0.52)" />
<polygon points="1272.50,313.25 1298.75,305.50 1298.75,321.25" fill="rgba(130,130,130,0.5)" />
<polygon points="1250.50,327.50 1277.50,325.00 1273.75,340.00" fill="rgba(120,150,155,0.52)" />
<polygon points="1363.75,307.00 1376.25,300.00 1382.50,323.75" fill="rgba(120,150,155,0.52)" />
<polygon points="1385.50,313.00 1411.25,305.50 1411.25,321.25" fill="rgba(130,130,130,0.5)" />
<polygon points="1440.00,296.25 1465.75,289.50 1448.00,308.75" fill="rgba(125,125,165,0.52)" />
<polygon points="1498.75,313.00 1524.25,305.50 1524.25,321.25" fill="rgba(130,130,130,0.5)" />
<polygon points="1535.00,324.25 1545.00,335.00 1521.25,346.25" fill="rgba(120,150,155,0.52)" />
<polygon points="1611.25,314.50 1630.00,308.00 1630.00,320.00" fill="rgba(150,170,170,0.6)" />
<polygon points="1322.00,378.75 1346.25,391.25 1333.75,401.25" fill="rgba(120,150,155,0.52)" />
<polygon points="1397.50,365.00 1379.50,380.00 1388.75,391.25" fill="rgba(125,125,165,0.52)" />
<polygon points="1415.00,388.75 1430.00,387.50 1426.25,412.50" fill="rgba(120,150,155,0.52)" />
<polygon points="1459.50,391.25 1473.75,396.25 1458.75,418.75" fill="rgba(120,150,155,0.52)" />
<polygon points="1353.75,462.00 1352.50,481.00 1363.75,481.00" fill="rgba(120,150,155,0.52)" />
<polygon points="1365.50,462.00 1358.75,481.00 1367.00,481.00" fill="rgba(125,125,165,0.52)" />
<polygon points="1430.00,551.25 1445.50,549.50 1441.25,576.25" fill="rgba(205,205,205,0.4)" />
<polygon points="1442.50,631.25 1453.75,622.00 1463.75,643.75" fill="rgba(205,205,205,0.4)" />
<polygon points="1500.00,672.50 1523.75,681.25 1498.75,687.00" fill="rgba(170,170,170,0.45)" />
<polygon points="1484.50,685.00 1510.50,692.00 1486.25,700.00" fill="rgba(125,125,165,0.52)" />
<polygon points="1400.00,721.50 1427.50,718.00 1407.00,735.50" fill="rgba(125,125,165,0.52)" />
<polygon points="1375.00,783.00 1367.50,791.00 1378.00,791.00" fill="rgba(125,125,165,0.52)" />
<circle cx="1362" cy="173.3" r="3.5" fill="#081e08"/>
<circle cx="1372.5" cy="173.3" r="3.5" fill="#201e08"/>
<circle cx="1383" cy="173.3" r="3.5" fill="#220808"/>
<circle cx="1625.5" cy="227" r="3.5" fill="#081e08"/>
<circle cx="1625.5" cy="237.7" r="3.5" fill="#201e08"/>
<circle cx="1625.5" cy="248.3" r="3.5" fill="#220808"/>
<circle cx="1180.5" cy="295.8" r="3.5" fill="#220808"/>
<circle cx="1180.5" cy="306.5" r="3.5" fill="#201e08"/>
<circle cx="1180.5" cy="317" r="3.5" fill="#081e08"/>
<g>
<path id="carb" d="M1067 205.5H1146Q1167 206.2 1175.3 219Q1179.6 231 1175.3 243Q1167 255.6 1146 256.2H1067Q1055.5 255 1051.8 245Q1048.8 231 1051.8 217Q1055.5 206.6 1067 205.5Z" fill="rgba(255,255,255,0.43)"/>
<path d="M1067 206.6H1128.5L1140.5 214.6L1139 215.4H1066Z M1067 255.2H1127L1140 246.6L1138.5 245.6H1066Z" fill="rgba(0,0,0,0.36)"/>
<path d="M1088.3 206.5h1.8v9h-1.8z M1107.3 206.5h1.8v9h-1.8z M1088.3 245.6h1.8v9.6h-1.8z M1106 245.6h1.8v9.6h-1.8z" fill="rgba(255,255,255,0.22)"/>
<path d="M1068 206.2h21v8.6h-21z M1140 207.4h21.5v10h-21.5z M1068 246h20.5v9.4h-20.5z M1139 246.8h21v8.4h-21z" fill="rgba(0,0,0,0.22)"/>
<path d="M1057.5 215.5Q1053.6 231 1057.5 246.5L1066.3 244.4Q1064 231 1066.3 216.6Z" fill="rgba(0,25,0,0.30)"/>
<path d="M1121.8 215.2Q1123.5 231 1121.8 247.6L1144.6 248.2Q1150.6 231 1144.6 214.4Z" fill="rgba(0,30,0,0.40)"/>
<path d="M1159 214Q1171 219 1173.4 231Q1171 243 1159 248.5" fill="none" stroke="rgba(255,255,255,0.18)" stroke-width="3"/>
<path d="M1067 205.5H1146Q1167 206.2 1175.3 219Q1179.6 231 1175.3 243Q1167 255.6 1146 256.2H1067Q1055.5 255 1051.8 245Q1048.8 231 1051.8 217Q1055.5 206.6 1067 205.5Z" fill="none" stroke="rgba(160,160,160,0.5)" stroke-width="1.1"/>
<path d="M1054.6 218Q1052.2 231 1054.6 244" fill="none" stroke="rgba(220,220,220,0.35)" stroke-width="1.4"/>
<path d="M1127.6 203.2l1.6-0.6l3.4 4.8l-2.6 0.4z M1125.8 259.6l1.6 0.8l3.8-4.4l-2.6-0.6z" fill="rgba(150,150,150,0.8)"/>
<circle cx="1162.9" cy="214.7" r="1.1" fill="#c8503c" opacity="0.9"/><circle cx="1162" cy="249.7" r="1.1" fill="#c8603c" opacity="0.9"/>
<path d="M1097 214.8h1.6v1.2h-1.6z M1102.6 215.2h1.6v1.2h-1.6z M1094.5 244.6h1.6v1.2h-1.6z M1100.4 245.2h1.6v1.4h-1.6z M1108.5 230h1.3v2.6h-1.3z M1097.3 229.8h1.3v1.3h-1.3z M1101 230.3h1.3v1.3h-1.3z" fill="#d8763a" opacity="0.85"/>
<circle cx="1099.3" cy="230.6" r="1.3" fill="rgba(200,200,200,0.6)"/>
</g></svg>
</body></html>
